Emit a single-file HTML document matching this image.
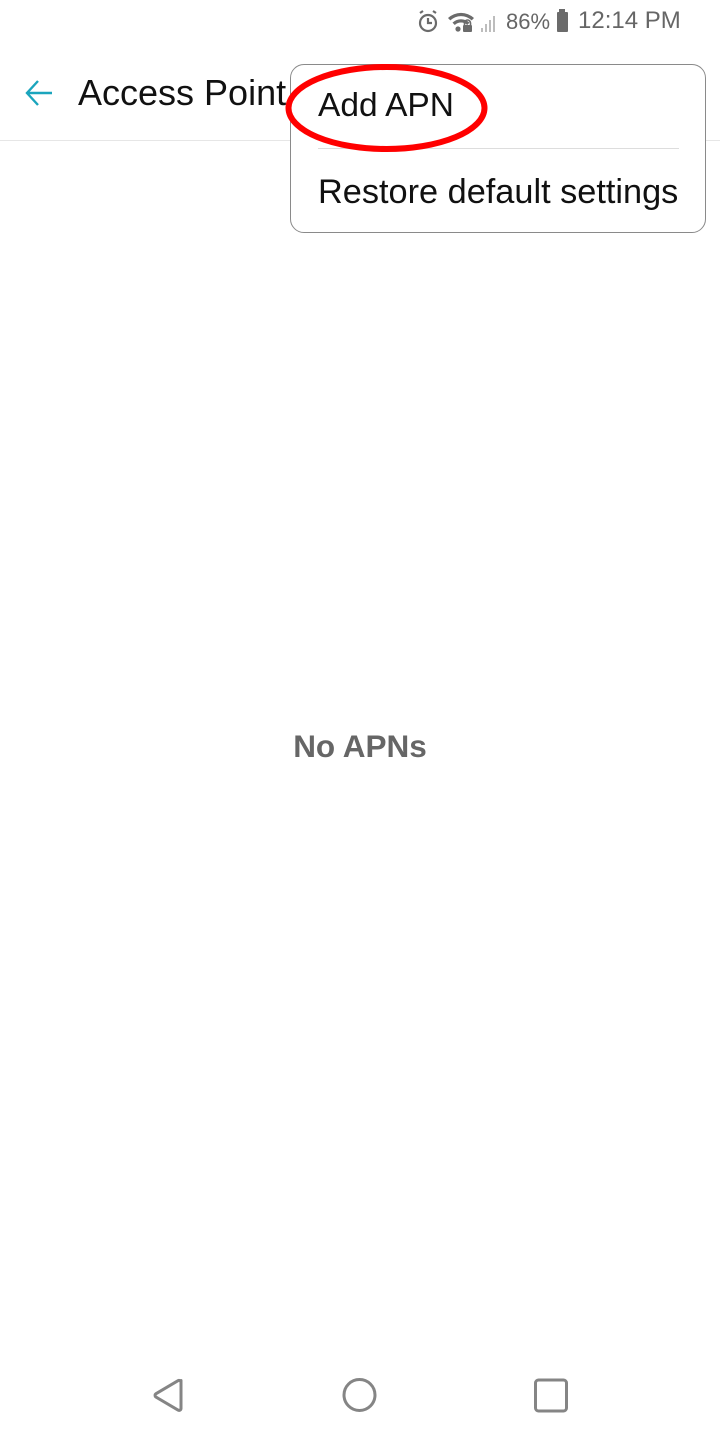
<!DOCTYPE html>
<html><head><meta charset="utf-8"><style>
html,body{margin:0;padding:0;width:720px;height:1440px;background:#fff;overflow:hidden;position:relative;font-family:"Liberation Sans",sans-serif}
.abs{position:absolute}
</style></head><body>
<svg class="abs" style="left:414px;top:8px" width="90" height="26" viewBox="0 0 90 26">
 <g fill="none" stroke="#6b6b6b" stroke-width="2.2">
  <circle cx="14" cy="15" r="8"/>
  <path d="M14 10v5h4"/>
  <path d="M6 5l3-2M22 5l-3-2"/>
 </g>
 <g fill="#6b6b6b">
  <path d="M34 10a19 19 0 0 1 26 0l-2.3 2.4a15.5 15.5 0 0 0-21.4 0z"/>
  <path d="M38.5 14.6a12.5 12.5 0 0 1 17 0l-2.3 2.4a9 9 0 0 0-12.4 0z"/>
  <circle cx="44" cy="21" r="2.6"/>
  <rect x="49" y="17" width="9" height="7" rx="1"/>
  <path d="M50.5 17v-2a3 3 0 0 1 6 0v2" fill="none" stroke="#6b6b6b" stroke-width="1.6"/>
 </g>
 <g fill="#bdbdbd"><rect x="67" y="20" width="2" height="4"/><rect x="71" y="16" width="2" height="8"/><rect x="75" y="12" width="2" height="12"/><rect x="79" y="8" width="2" height="16"/></g>
</svg>
<div class="abs" style="left:506px;top:8px;font-size:22px;color:#666;line-height:28px">86%</div>
<svg class="abs" style="left:556px;top:9px" width="16" height="24"><rect x="3" y="0" width="6" height="3" fill="#6b6b6b"/><rect x="1" y="3" width="11" height="20" rx="1" fill="#6b6b6b"/></svg>
<div class="abs" style="left:578px;top:7px;font-size:24px;color:#666;line-height:28px">12:14 PM</div>

<svg class="abs" style="left:24px;top:78px" width="30" height="30" viewBox="0 0 30 30"><path d="M3 15h25M14 3L3 15l11 12" fill="none" stroke="#1ba5bd" stroke-width="2.4"/></svg>
<div class="abs" style="left:78px;top:71px;font-size:36px;color:#111;line-height:44px;white-space:nowrap">Access Point</div>
<div class="abs" style="left:0;top:140px;width:720px;height:1px;background:#e6e6e6"></div>

<div class="abs" style="left:290px;top:64px;width:414px;height:167px;border:1px solid #8a8a8a;border-radius:14px;background:#fff"></div>
<div class="abs" style="left:318px;top:86px;font-size:33.5px;color:#111;line-height:40px;white-space:nowrap">Add APN</div>
<div class="abs" style="left:318px;top:148px;width:361px;height:1px;background:#ddd"></div>
<div class="abs" style="left:318px;top:172px;font-size:34.3px;color:#111;line-height:40px;white-space:nowrap">Restore default settings</div>
<svg class="abs" style="left:0;top:0" width="720" height="200"><ellipse cx="386.5" cy="108" rx="98" ry="41" fill="none" stroke="#f00" stroke-width="6"/></svg>

<div class="abs" style="left:0;top:727px;width:720px;text-align:center;font-size:31.5px;font-weight:bold;color:#666;line-height:38px">No APNs</div>

<svg class="abs" style="left:0;top:1370px" width="720" height="50">
 <g fill="none" stroke="#858585" stroke-width="3" stroke-linejoin="round">
  <path d="M181 10.5v28a2 2 0 0 1-3 1.6l-22-13a2 2 0 0 1 0-3.4l22-13a2 2 0 0 1 3 1.6z"/>
  <circle cx="359.5" cy="25" r="15.5"/>
  <rect x="535.5" y="10" width="31" height="31" rx="3"/>
 </g>
</svg>
</body></html>
